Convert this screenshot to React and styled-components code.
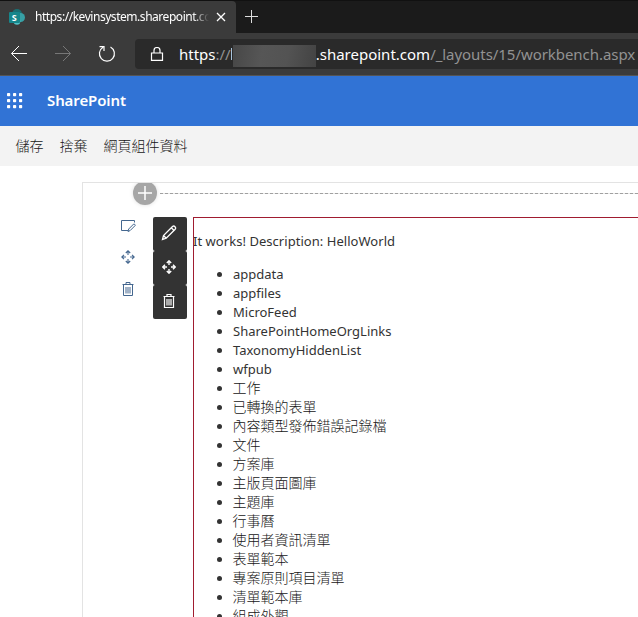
import React from 'react';
import styled, { createGlobalStyle, css } from 'styled-components';

const Global = createGlobalStyle`
  * { box-sizing: border-box; }
  body { margin: 0; background: #fff; color: #333; overflow: hidden;
    font-family: "Noto Sans", "Noto Sans CJK TC", sans-serif; }
`;
const Page = styled.div`width: 100%; height: 100vh; overflow: hidden; display: flex; flex-direction: column;`;
const fit = css`
  display: inline-block; white-space: pre; flex: none;
  letter-spacing: ${p => p.$ls || 0}px;
`;
const TabStrip = styled.header`flex: none; height: 33px; background: #1b1b1b; border-top: 1px solid #111; display: flex;`;
const Tab = styled.div`
  width: 236px; height: 32px; padding: 0 9px 0 9px; background: #3b3b3b; border-radius: 0 4px 0 0;
  display: flex; align-items: center; color: #fff; svg { flex: none; }
`;
const TabTitle = styled.div`
  ${fit} width: 174px; margin-left: 10px; margin-right: 7px; overflow: hidden; font-size: 12px; line-height: 20px;
  mask-image: linear-gradient(90deg, #000 158px, transparent 174px);
`;
const NewTab = styled.div`padding: 9px 0 0 9px; color: #ddd; line-height: 0;`;
const AddressRow = styled.div`
  flex: none; height: 43px; background: #3b3b3b; border-bottom: 1px solid #555; display: flex; padding: 6px 0 0 10px; color: #fff;
`;
const NavButtons = styled.div`width: 125px; display: flex; gap: 26px; padding-top: 6px; svg { flex: none; }`;
const AddressBar = styled.div`
  flex: 1; height: 30px; background: #2a2a2a; border-radius: 4px 0 0 4px; display: flex; align-items: center;
  padding-left: 15px; overflow: hidden; font-size: 15px; line-height: 22px; svg { flex: none; margin-right: 15px; }
`;
const UrlPart = styled.span`${fit} color: ${p => (p.$dim ? '#929292' : '#fff')};`;
const HostEdge = styled.span`flex: none; width: 1px; height: 12px; margin: 0 1px 0 0; background: #a9c4dc;`;
const Redacted = styled.span`
  flex: none; width: 83px; height: 22px; margin-top: 3px;
  background: linear-gradient(100deg, #474747, #565656 35%, #535353 65%, #434343);
`;
const Suite = styled.div`
  flex: none; height: 50px; background: #3173d5; display: flex; align-items: center; padding-left: 7px; color: #fff;
`;
const Brand = styled.div`${fit} margin: 0 0 2px 24px; font-size: 15px; font-weight: 600;`;
const Commands = styled.nav`
  flex: none; height: 40px; background: #f3f3f3; display: flex; align-items: center; gap: 16px; padding: 0 0 2px 15.5px;
  font: 300 14px "Noto Sans CJK TC", sans-serif; color: #161616;
`;
const Canvas = styled.main`
  flex: 1; margin: 16px 0 0 82px; border: 1px solid #e3e3e3; border-width: 1px 0 0 1px; overflow: hidden; min-height: 0;
`;
const AddRow = styled.div`display: flex; height: 22px; padding-left: 50px;`;
const AddButton = styled.div`
  width: 24px; height: 24px; margin-top: -2px; border-radius: 50%; background: #a6a6a6; box-shadow: 0 0 4px #ddd; line-height: 0;
`;
const Dashes = styled.div`
  flex: 1; height: 1px; margin: 10px 0 0 3px;
  background: repeating-linear-gradient(90deg, #a0a0a0 0 3px, #e8e8e8 3px 5px);
`;
const Section = styled.section`display: flex; padding-top: 12px;`;
const SectionTools = styled.div`width: 70px; padding: 2px 0 0 38px; display: flex; flex-direction: column; gap: 15px; color: #44678f; line-height: 0; svg:last-child { margin-top: 3px; }`;
const PartTools = styled.div`width: 34px; height: 102px; color: #fff;`;
const PartTool = styled.div`
  height: 34px; display: grid; place-items: center; padding: 0 2px 2px 0; background: #333; border-radius: 2px;
`;
const WebPart = styled.article`
  flex: 1; height: 420px; margin-left: 6px; border: 1px solid #a01c30; border-width: 1px 0 0 1px; font-size: 13px;
`;
const Message = styled.p`${fit} display: block; margin: 14px 0 0 -1px; line-height: 19px;`;
const List = styled.ul`margin: 14px 0 0; padding: 0 0 0 39px;`;
const Item = styled.li`
  line-height: 19px; height: 19px; white-space: nowrap;
`;
const CjkLabel = styled.span`
  display: inline-block; vertical-align: top; height: 19px; margin: -1px 0 0 -0.5px; color: #161616;
  font: 300 14px/19px "Noto Sans CJK TC", sans-serif;
`;

const Icon = ({ s = 16, w = 1, children }) => (
  <svg width={s} height={s} viewBox={`0 0 ${s} ${s}`} fill="none" stroke="currentColor" strokeWidth={w}>{children}</svg>
);
const Logo = () => (
  <svg width="16" height="16" viewBox="0 0 16 16">
    <circle cx="8" cy="5" r="5" fill="#1b6f73" /><circle cx="11.5" cy="8.5" r="4.5" fill="#37a0a5" />
    <circle cx="8" cy="12.5" r="3.3" fill="#4fc0c6" /><rect y="3" width="11" height="11" rx="1" fill="#17868b" />
    <text x="5.3" y="11.7" fontSize="9" fontWeight="700" fill="#fff" textAnchor="middle">S</text>
  </svg>
);
const Waffle = () => (
  <svg width="16" height="16" fill="#fff">
    {[0, 6, 12].map(y => [0, 6, 12].map(x => <rect key={`${x}-${y}`} x={x} y={y} width="3.2" height="3.2" rx=".8" />))}
  </svg>
);
const Pencil = () => <Icon w={1.3}><path d="m1.500 14.500 1-4 9-9q1.300-1 2.500.200t.200 2.500l-9 9zM2.500 10.500l3 3M10.300 2.700l3 3" /></Icon>;
const Move = ({ w = 1.1 }) => <Icon s={14} w={w}><path d="M7 1v4M7 9v4M1 7h4M9 7h4M4.800 3 7 .8 9.200 3M4.800 11 7 13.200 9.200 11M3 4.800.8 7 3 9.200M11 4.800 13.200 7 11 9.200" /></Icon>;
const Trash = ({ w = 1 }) => <Icon s={14} w={w}><path d="M1.500 2.500h11M5 2.500v-2h4v2M2.500 2.500v11h9v-11M5 5v6.500M7 5v6.500M9 5v6.500" /></Icon>;
const EditSection = () => <Icon><path d="M7 11.500H.5v-10h13v2M7 12.500l.7-2.500 5-5q1.500 0 1.500 1.500l-5 5z" /></Icon>;

const latin = ['appdata', 'appfiles', 'MicroFeed', 'SharePointHomeOrgLinks', 'TaxonomyHiddenList', 'wfpub'];
const cjk = ['工作', '已轉換的表單', '內容類型發佈錯誤記錄檔', '文件', '方案庫', '主版頁面圖庫', '主題庫', '行事曆', '使用者資訊清單', '表單範本', '專案原則項目清單', '清單範本庫', '組成外觀'];

export default function App() {
  return (
    <Page>
      <Global />
      <TabStrip>
        <Tab><Logo /><TabTitle $ls={-0.46}>https://kevinsystem.sharepoint.com</TabTitle><Icon s={10} w={1.3}><path d="m1 1 8 8M9 1 1 9" /></Icon></Tab>
        <NewTab><Icon s={13}><path d="M6.500 0v13M0 6.500h13" /></Icon></NewTab>
      </TabStrip>
      <AddressRow>
        <NavButtons>
          <Icon s={18}><path d="M17 8.500H1.500M9 1 1.500 8.500 9 16" /></Icon>
          <Icon s={18}><path d="M1 8.500h15.500M9 1l7.500 7.500L9 16" stroke="#777" /></Icon>
          <Icon s={18} w={1.2}><path d="M5 2.200A7.500 7.500 0 1 0 12.500 2M6 6V1.700H1.500" /></Icon>
        </NavButtons>
        <AddressBar>
          <Icon s={14} w={1.2}><path d="M1.500 6h11v7.400h-11zM4 6V3.500a3 3 0 0 1 6 0V6" /></Icon>
          <UrlPart>https</UrlPart><UrlPart $dim>://</UrlPart><HostEdge /><Redacted /><UrlPart>.sharepoint.com</UrlPart><UrlPart $dim $ls={-0.05}>/_layouts/15/workbench.aspx</UrlPart>
        </AddressBar>
      </AddressRow>
      <Suite><Waffle /><Brand $ls={-0.1}>SharePoint</Brand></Suite>
      <Commands><span>儲存</span><span>捨棄</span><span>網頁組件資料</span></Commands>
      <Canvas>
        <AddRow><AddButton><Icon s={24} w={1.5}><path d="M12 5v14M5 12h14" stroke="#fff" /></Icon></AddButton><Dashes /></AddRow>
        <Section>
          <SectionTools><EditSection /><Move /><Trash /></SectionTools>
          <PartTools><PartTool><Pencil /></PartTool><PartTool><Move w={1.4} /></PartTool><PartTool><Trash w={1.2} /></PartTool></PartTools>
          <WebPart>
            <Message $ls={0.04}>It works! Description: HelloWorld</Message>
            <List>
              {latin.map(t => <Item key={t}>{t}</Item>)}
              {cjk.map(t => <Item key={t}><CjkLabel>{t}</CjkLabel></Item>)}
            </List>
          </WebPart>
        </Section>
      </Canvas>
    </Page>
  );
}
